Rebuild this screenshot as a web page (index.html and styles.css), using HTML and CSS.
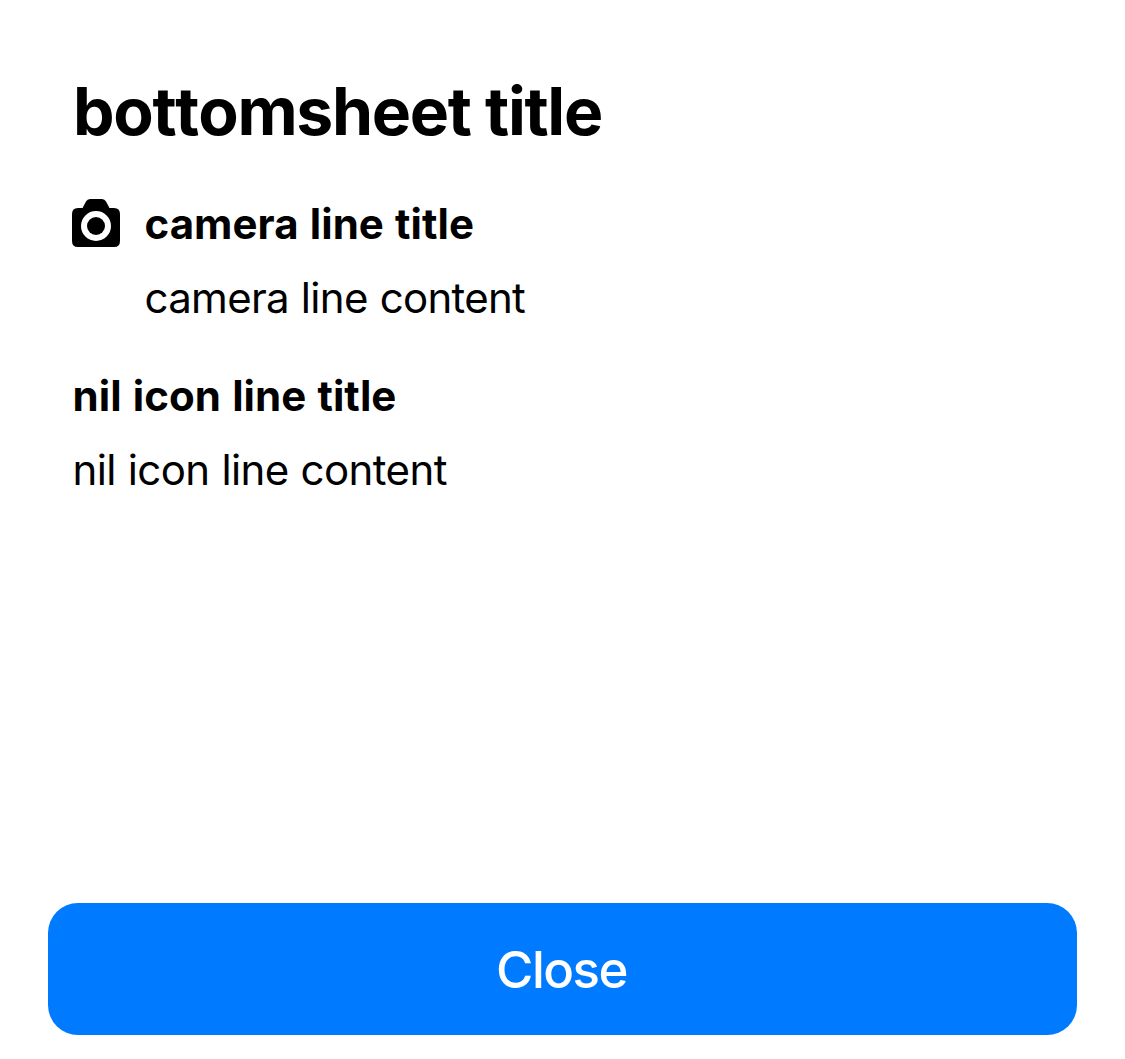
FILE: index.html
```html
<!DOCTYPE html>
<html lang="en">
<head>
<meta charset="utf-8">
<title>Bottom sheet</title>
<link rel="stylesheet" href="styles.css">
</head>
<body>
<main class="sheet">
  <h1 class="title">bottomsheet title</h1>
  <div class="lines">
    <section class="line line-camera">
      <svg class="icon" viewBox="0 0 48 48" aria-hidden="true">
        <path fill-rule="evenodd" d="M6 9H10.500L14 2.500Q15.300 0 18 0H30Q32.700 0 34 2.500L37.500 9H42Q48 9 48 15V42Q48 48 42 48H6Q0 48 0 42V15Q0 9 6 9ZM24 12A15 15 0 1 0 24 42A15 15 0 1 0 24 12Z"/>
        <circle cx="24" cy="27" r="9"/>
      </svg>
      <div class="text">
        <h2 class="line-title">camera line title</h2>
        <p class="line-content">camera line content</p>
      </div>
    </section>
    <section class="line">
      <div class="text">
        <h2 class="line-title">nil icon line title</h2>
        <p class="line-content">nil icon line content</p>
      </div>
    </section>
  </div>
  <button class="close" type="button">Close</button>
</main>
</body>
</html>
```
FILE: styles.css
```css
* { box-sizing: border-box; }
body { margin: 0; background: #fff; color: #000; font-family: Inter, "Liberation Sans", sans-serif; font-variant-ligatures: none; }
.sheet { height: 1059px; padding: 71px 48px 24px; display: flex; flex-direction: column; }
h1, h2, p { margin: 0; white-space: nowrap; }
.title { padding-left: 25px; font-size: 66px; line-height: 80px; font-weight: 700; font-kerning: none; letter-spacing: -1.3px; margin-bottom: 48px; }
.lines { display: flex; flex-direction: column; gap: 48px; padding-left: 24px; }
.line { display: flex; gap: 24px; }
.icon { width: 48px; height: 48px; flex: none; }
.text { display: flex; flex-direction: column; gap: 24px; }
.line-title, .line-content { font-size: 42px; line-height: 50px; padding-left: 0.5px; }
.line-title { font-weight: 700; letter-spacing: 0.05px; word-spacing: 1.2px; }
.line-content { font-weight: 400; letter-spacing: -0.58px; word-spacing: 0.6px; }
.line-camera .line-content { letter-spacing: -0.7px; word-spacing: 0.8px; }
.close { margin-top: auto; height: 132px; padding: 2px 2px 0 0; border: 0; border-radius: 30px; background: #007aff; color: #fff; font: 500 51px/60px Inter, "Liberation Sans", sans-serif; letter-spacing: -1.5px; }
```
